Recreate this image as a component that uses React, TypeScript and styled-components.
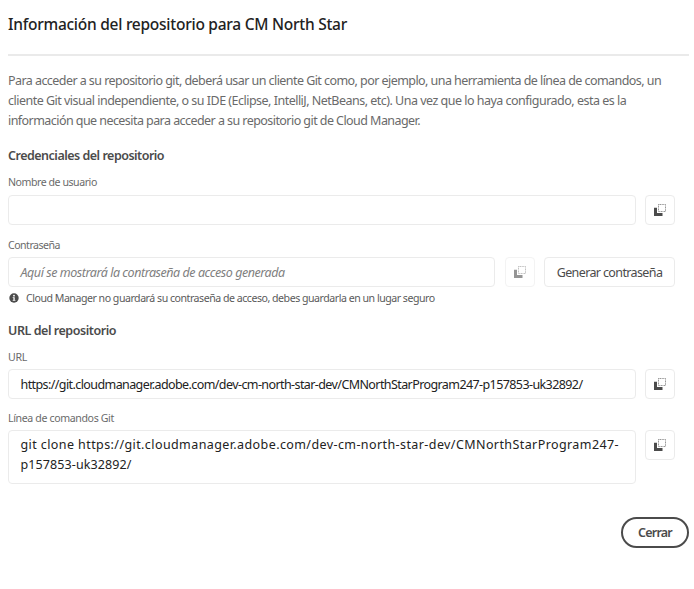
import React from "react";
import styled, { createGlobalStyle } from "styled-components";

const GlobalStyle = createGlobalStyle`
  *, *::before, *::after { box-sizing: border-box; }
  body {
    margin: 0;
    background: #fff;
    color: #6a6a6a;
    font-family: "Noto Sans", "Open Sans", sans-serif;
    font-size: 12.5px;
  }
`;

const Dialog = styled.main`
  width: 694px;
  height: 589px;
  padding: 0 5px 0 8px;
  display: flex;
  flex-direction: column;
  white-space: nowrap;
  overflow: hidden;
`;

const Header = styled.header`
  flex: none;
  height: 56px;
  padding-top: 12px;
  border-bottom: 2px solid #eaeaea;
`;

const Title = styled.h1`
  margin: 0;
  font-size: 15.5px;
  font-weight: 500;
  line-height: 24px;
  letter-spacing: -0.26px;
  color: #222;
`;

const Intro = styled.p`
  margin: 15px 0 0;
  line-height: 20px;
  letter-spacing: -0.557px;
`;

const IntroLine = styled.span<{ $track?: number }>`
  display: block;
  letter-spacing: ${(p) => p.$track ?? -0.557}px;
`;

const Section = styled.section<{ $gap: number }>`
  margin-top: ${(p) => p.$gap}px;
  width: 667px;
`;

const SectionTitle = styled.h2<{ $track: number }>`
  margin: 0;
  font-size: 12.5px;
  font-weight: 600;
  line-height: 20px;
  letter-spacing: ${(p) => p.$track}px;
  color: #4b4b4b;
`;

const Label = styled.label<{ $gap: number; $track: number }>`
  display: block;
  margin-top: ${(p) => p.$gap}px;
  font-size: 10.6px;
  line-height: 16px;
  letter-spacing: ${(p) => p.$track}px;
`;

const FieldRow = styled.div<{ $gap: number }>`
  display: flex;
  align-items: flex-start;
  gap: 9.5px;
  margin-top: ${(p) => p.$gap}px;
`;

const Field = styled.div<{ $track?: number }>`
  flex: 1;
  height: 30px;
  padding: 0 11.5px;
  border: 1px solid #ebebeb;
  border-radius: 4px;
  line-height: 29px;
  letter-spacing: ${(p) => p.$track ?? 0}px;
  color: #222;
`;

const Placeholder = styled.span`
  font-style: italic;
  color: #808080;
`;

const CommandField = styled(Field)`
  height: 54px;
  padding-top: 4px;
  line-height: 20px;
`;

const CommandTail = styled.div`
  letter-spacing: 0.1px;
`;

const IconButton = styled.button<{ $muted?: boolean }>`
  flex: none;
  display: flex;
  align-items: center;
  justify-content: center;
  width: 30px;
  height: 30px;
  padding: 0 0 1px;
  background: #fff;
  border: 1px solid ${(p) => (p.$muted ? "#f3f3f3" : "#ebebeb")};
  border-radius: 4px;
  color: ${(p) => (p.$muted ? "#959595" : "#4b4b4b")};
`;

const GenerateButton = styled.button`
  flex: none;
  width: 131px;
  height: 30px;
  padding: 0;
  background: #fff;
  border: 1px solid #ebebeb;
  border-radius: 4px;
  font: inherit;
  letter-spacing: -0.62px;
  color: #4b4b4b;
`;

const Hint = styled.div`
  display: flex;
  align-items: center;
  gap: 7px;
  height: 20px;
  margin-top: 1px;
  padding-left: 1px;
  font-size: 10.6px;
  letter-spacing: -0.48px;
  color: #5a5a5a;
`;

const Footer = styled.footer`
  display: flex;
  justify-content: flex-end;
  margin-top: 33px;
`;

const CloseButton = styled.button`
  width: 68px;
  height: 31px;
  padding: 0 0 1px;
  background: #fff;
  border: 2px solid #4b4b4b;
  border-radius: 16px;
  font: inherit;
  font-weight: 600;
  letter-spacing: -0.75px;
  color: #4b4b4b;
`;

const CopyIcon = () => (
  <svg width="12" height="12" viewBox="0 0 12 12" fill="none" aria-hidden="true">
    <path d="M0 3.7H3V9H8.5V12H0Z" fill="currentColor" />
    <rect x="4.5" y="0.5" width="7" height="7" stroke="currentColor" strokeWidth="0.9" strokeDasharray="1 0.6" opacity="0.7" />
  </svg>
);

const InfoIcon = () => (
  <svg width="10" height="10" viewBox="0 0 10 10" aria-hidden="true">
    <circle cx="5" cy="5" r="4.7" fill="#4b4b4b" />
    <circle cx="5" cy="2.7" r="0.9" fill="#fff" />
    <path d="M3.7 4.3H5.7V7H6.4V7.8H3.7V7H4.4V5.1H3.7Z" fill="#fff" />
  </svg>
);

const CopyButton = ({ muted }: { muted?: boolean }) => (
  <IconButton $muted={muted} disabled={muted} aria-label="Copiar">
    <CopyIcon />
  </IconButton>
);

export default function App() {
  return (
    <>
      <GlobalStyle />
      <Dialog>
        <Header>
          <Title>Información del repositorio para CM North Star</Title>
        </Header>
        <Intro>
          <IntroLine>
            Para acceder a su repositorio git, deberá usar un cliente Git como, por ejemplo, una herramienta de línea de comandos, un
          </IntroLine>
          <IntroLine $track={-0.51}>
            cliente Git visual independiente, o su IDE (Eclipse, IntelliJ, NetBeans, etc). Una vez que lo haya configurado, esta es la
          </IntroLine>
          <IntroLine>información que necesita para acceder a su repositorio git de Cloud Manager.</IntroLine>
        </Intro>

        <Section $gap={15}>
          <SectionTitle $track={-0.5}>Credenciales del repositorio</SectionTitle>
          <Label $gap={8} $track={-0.46}>Nombre de usuario</Label>
          <FieldRow $gap={5}>
            <Field />
            <CopyButton />
          </FieldRow>
          <Label $gap={12} $track={-0.52}>Contraseña</Label>
          <FieldRow $gap={4}>
            <Field $track={-0.45}>
              <Placeholder>Aquí se mostrará la contraseña de acceso generada</Placeholder>
            </Field>
            <CopyButton muted />
            <GenerateButton>Generar contraseña</GenerateButton>
          </FieldRow>
          <Hint>
            <InfoIcon />
            <span>Cloud Manager no guardará su contraseña de acceso, debes guardarla en un lugar seguro</span>
          </Hint>
        </Section>

        <Section $gap={13}>
          <SectionTitle $track={-0.45}>URL del repositorio</SectionTitle>
          <Label $gap={8} $track={-0.3}>URL</Label>
          <FieldRow $gap={4}>
            <Field $track={-0.589}>
              https://git.cloudmanager.adobe.com/dev-cm-north-star-dev/CMNorthStarProgram247-p157853-uk32892/
            </Field>
            <CopyButton />
          </FieldRow>
          <Label $gap={11} $track={-0.37}>Línea de comandos Git</Label>
          <FieldRow $gap={4}>
            <CommandField $track={0.41}>
              git clone https://git.cloudmanager.adobe.com/dev-cm-north-star-dev/CMNorthStarProgram247-
              <CommandTail>p157853-uk32892/</CommandTail>
            </CommandField>
            <CopyButton />
          </FieldRow>
        </Section>

        <Footer>
          <CloseButton>Cerrar</CloseButton>
        </Footer>
      </Dialog>
    </>
  );
}
